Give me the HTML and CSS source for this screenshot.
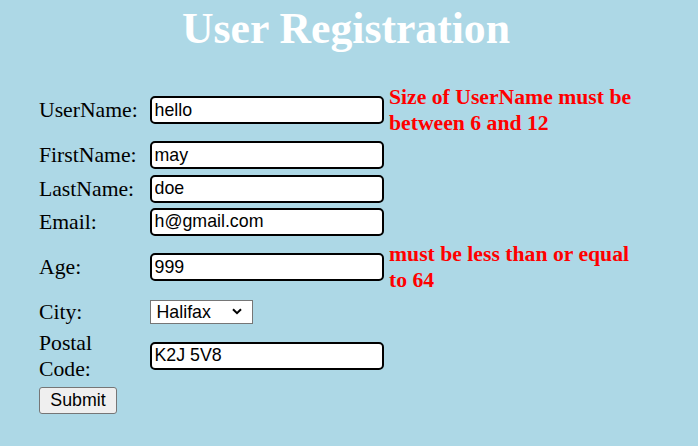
FILE: index.html
```html
<!DOCTYPE html>
<html lang="en">
<head>
<meta charset="utf-8">
<title>User Registration</title>
<link rel="stylesheet" href="styles.css">
</head>
<body>
<h1 class="title">User Registration</h1>
<form class="reg-form">
  <div class="grid">
    <label class="lbl">UserName:</label>
    <input class="field" type="text" value="hello">
    <span class="err">Size of UserName must be between 6 and 12</span>

    <label class="lbl">FirstName:</label>
    <input class="field" type="text" value="may">
    <span class="err"></span>

    <label class="lbl">LastName:</label>
    <input class="field" type="text" value="doe">
    <span class="err"></span>

    <label class="lbl">Email:</label>
    <input class="field" type="text" value="h@gmail.com">
    <span class="err"></span>

    <label class="lbl">Age:</label>
    <input class="field" type="text" value="999">
    <span class="err">must be less than or equal to 64</span>

    <label class="lbl">City:</label>
    <div class="sel-wrap">
      <select class="city">
        <option>Halifax</option>
        <option>Toronto</option>
        <option>Ottawa</option>
      </select>
      <svg class="chev" width="10" height="7" viewBox="0 0 10 7" aria-hidden="true">
        <path d="M1 1.2 L5 5.2 L9 1.2" fill="none" stroke="#000" stroke-width="2"/>
      </svg>
    </div>
    <span class="err"></span>

    <label class="lbl">Postal Code:</label>
    <input class="field" type="text" value="K2J 5V8">
    <span class="err"></span>

    <div class="btn-cell"><button class="submit" type="button">Submit</button></div>
  </div>
</form>
</body>
</html>
```
FILE: styles.css
```css
html, body {
  margin: 0;
  padding: 0;
}
body {
  background: #add8e6;
  font-family: "Liberation Serif", "Times New Roman", serif;
  font-size: 21.7px;
  color: #000;
  width: 698px;
  height: 446px;
  overflow: hidden;
}
.title {
  margin: 0;
  text-align: center;
  color: #fff;
  font-weight: bold;
  font-size: 43.7px;
  line-height: 50px;
  padding-top: 3px;
  padding-right: 6px;
}
.reg-form {
  padding: 31px 0 0 39px;
}
.grid {
  display: grid;
  grid-template-columns: 105px 234px 256px;
  column-gap: 5.5px;
  row-gap: 5.33px;
  align-items: center;
}
.lbl {
  line-height: 26px;
}
.field {
  box-sizing: border-box;
  width: 234px;
  height: 28px;
  border: 2px solid #000;
  border-radius: 5px;
  background: #fff;
  padding: 0 3px;
  font-family: "Liberation Sans", Arial, sans-serif;
  font-size: 17.8px;
  color: #000;
  outline: none;
  margin: 0;
}
.err {
  color: #f00;
  font-weight: bold;
  line-height: 26px;
}
.sel-wrap {
  position: relative;
  display: flex;
  width: 103px;
}
.city {
  box-sizing: border-box;
  width: 103px;
  height: 24px;
  font-family: "Liberation Sans", Arial, sans-serif;
  font-size: 17.8px;
  border: 1px solid #767676;
  border-radius: 0;
  background: #fff;
  color: #000;
  margin: 0;
  padding: 0 20px 0 6px;
  -webkit-appearance: none;
  appearance: none;
}
.chev {
  position: absolute;
  left: 82px;
  top: 8px;
  pointer-events: none;
}
.btn-cell {
  grid-column: 1 / span 2;
  display: flex;
}
.submit {
  box-sizing: border-box;
  width: 78px;
  height: 27px;
  font-family: "Liberation Sans", Arial, sans-serif;
  font-size: 17.8px;
  color: #000;
  background: #efefef;
  border: 1px solid #767676;
  border-radius: 3px;
  padding: 0;
  margin: 0;
}
```
